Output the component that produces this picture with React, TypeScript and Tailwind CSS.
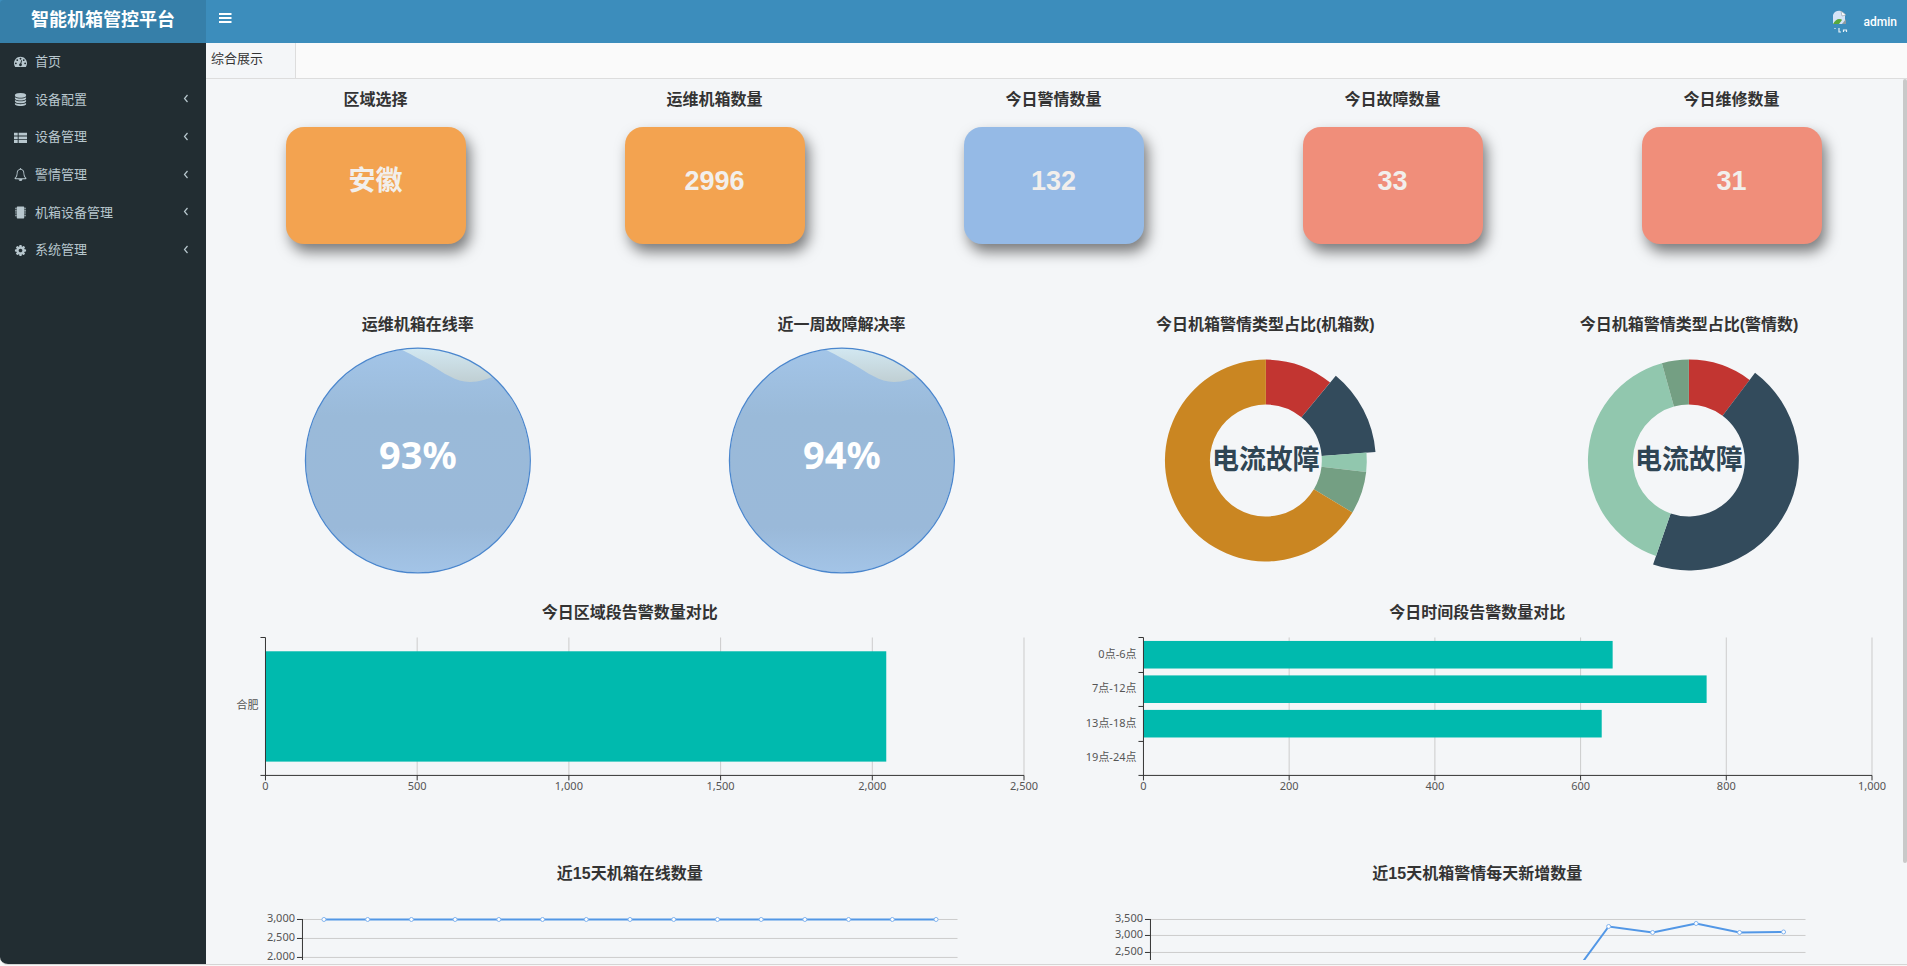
import { useState } from 'react'
import type { ReactNode } from 'react'

const UI_FONT = 'font-["Liberation_Sans","Noto_Sans_CJK_SC",sans-serif]'
const CHART_FONT = 'font-["Noto_Sans","Noto_Sans_CJK_SC",sans-serif]'

const ICONS: Record<string, string> = {
  dashboard:
    'M384 1152q0-53-37.5-90.5t-90.5-37.5-90.5 37.5-37.5 90.5 37.5 90.5 90.5 37.5 90.5-37.5 37.5-90.5zm192-448q0-53-37.5-90.5t-90.5-37.5-90.5 37.5-37.5 90.5 37.5 90.5 90.5 37.5 90.5-37.5 37.5-90.5zm428 481l101-382q6-26-7.5-48.5t-38.5-29.5-48 6.5-30 39.5l-101 382q-60 5-107 43.5t-63 98.5q-20 77 20 146t117 89 146-20 89-117q16-60-6-117t-72-91zm660-33q0-53-37.5-90.5t-90.5-37.5-90.5 37.5-37.5 90.5 37.5 90.5 90.5 37.5 90.5-37.5 37.5-90.5zm-640-640q0-53-37.5-90.5t-90.5-37.5-90.5 37.5-37.5 90.5 37.5 90.5 90.5 37.5 90.5-37.5 37.5-90.5zm448 192q0-53-37.5-90.5t-90.5-37.5-90.5 37.5-37.5 90.5 37.5 90.5 90.5 37.5 90.5-37.5 37.5-90.5zm320 448q0 261-141 483-19 29-54 29h-1402q-35 0-54-29-141-221-141-483 0-182 71-348t191-286 286-191 348-71 348 71 286 191 191 286 71 348z',
  database:
    'M896 768q237 0 443-43t325-127v170q0 69-103 128t-280 93.5-385 34.5-385-34.5-280-93.5-103-128v-170q119 84 325 127t443 43zm0 768q237 0 443-43t325-127v170q0 69-103 128t-280 93.5-385 34.5-385-34.5-280-93.5-103-128v-170q119 84 325 127t443 43zm0-384q237 0 443-43t325-127v170q0 69-103 128t-280 93.5-385 34.5-385-34.5-280-93.5-103-128v-170q119 84 325 127t443 43zm0-1152q208 0 385 34.5t280 93.5 103 128v128q0 69-103 128t-280 93.5-385 34.5-385-34.5-280-93.5-103-128v-128q0-69 103-128t280-93.5 385-34.5z',
  list: 'M0 230h512v384h-512zM0 742h512v384h-512zM0 1254h512v384h-512zM640 230h1152v384h-1152zM640 742h1152v384h-1152zM640 1254h1152v384h-1152z',
  bell: 'M912 1696q0-16-16-16-59 0-101.5-42.5t-42.5-101.5q0-16-16-16t-16 16q0 73 51.5 124.5t124.5 51.5q16 0 16-16zm-666-288h1300q-266-300-266-832 0-51-24-105t-69-103-121.5-80.5-169.5-31.5-169.5 31.5-121.5 80.5-69 103-24 105q0 532-266 832zm1482 0q0 52-38 90t-90 38h-448q0 106-75 181t-181 75-181-75-75-181h-448q-52 0-90-38t-38-90q50-42 91-88t85-119.5 74.5-158.5 50-206 19.5-260q0-152 117-282.5t307-158.5q-8-19-8-39 0-40 28-68t68-28 68 28 28 68q0 20-8 39 190 28 307 158.5t117 282.5q0 139 19.5 260t50 206 74.5 158.5 85 119.5 91 88z',
  chip: 'M480 64h832q96 0 96 96v1472q0 96-96 96h-832q-96 0-96-96v-1472q0-96 96-96zM160 256h192v128h-192zM160 512h192v128h-192zM160 768h192v128h-192zM160 1024h192v128h-192zM160 1280h192v128h-192zM1440 256h192v128h-192zM1440 512h192v128h-192zM1440 768h192v128h-192zM1440 1024h192v128h-192zM1440 1280h192v128h-192z',
  cog: 'M1152 896q0-106-75-181t-181-75-181 75-75 181 75 181 181 75 181-75 75-181zm512-109v222q0 12-8 23t-20 13l-185 28q-19 54-39 91 35 50 107 138 10 12 10 25t-9 23q-27 37-99 108t-94 71q-12 0-26-9l-138-108q-44 23-91 38-16 136-29 186-7 28-36 28h-222q-14 0-24.5-8.5t-11.5-21.5l-28-184q-49-16-90-37l-141 107q-10 9-25 9-14 0-25-11-126-114-165-168-7-10-7-23 0-12 8-23 15-21 51-66.5t54-70.5q-27-50-41-99l-183-27q-13-2-21-12.5t-8-23.5v-222q0-12 8-23t19-13l186-28q14-46 39-92-40-57-107-138-10-12-10-24 0-10 9-23 26-36 98.5-107.5t94.5-71.5q13 0 26 10l138 107q44-23 91-38 16-136 29-186 7-28 36-28h222q14 0 24.5 8.5t11.5 21.5l28 184q49 16 90 37l142-107q9-9 24-9 13 0 25 10 129 119 165 170 7 8 7 22 0 12-8 23-15 21-51 66.5t-54 70.5q26 50 41 98l183 28q13 2 21 12.5t8 23.5z',
}

const MENU = [
  { icon: 'dashboard', label: '首页', children: false },
  { icon: 'database', label: '设备配置', children: true },
  { icon: 'list', label: '设备管理', children: true },
  { icon: 'bell', label: '警情管理', children: true },
  { icon: 'chip', label: '机箱设备管理', children: true },
  { icon: 'cog', label: '系统管理', children: true },
]

const CARDS = [
  { title: '区域选择', value: '安徽', color: 'bg-[#f3a350]' },
  { title: '运维机箱数量', value: '2996', color: 'bg-[#f3a350]' },
  { title: '今日警情数量', value: '132', color: 'bg-[#95bae6]' },
  { title: '今日故障数量', value: '33', color: 'bg-[#f08e7a]' },
  { title: '今日维修数量', value: '31', color: 'bg-[#f08e7a]' },
]

type Slice = { from: number; to: number; color: string; active?: boolean }

const BOX_SLICES: Slice[] = [
  { from: 0, to: 39.5, color: '#c23531' },
  { from: 39.5, to: 85.5, color: '#334b5c', active: true },
  { from: 85.5, to: 96.5, color: '#91c7ae' },
  { from: 96.5, to: 121, color: '#749f83' },
  { from: 121, to: 360, color: '#ca8622' },
]

const ALARM_SLICES: Slice[] = [
  { from: 0, to: 37, color: '#c23531' },
  { from: 37, to: 199, color: '#334b5c', active: true },
  { from: 199, to: 344.5, color: '#91c7ae' },
  { from: 344.5, to: 360, color: '#749f83' },
]

function SectionTitle({ children }: { children: ReactNode }) {
  return <h3 className="h-6 text-center text-base leading-[26px] font-bold text-[#333]">{children}</h3>
}

function Liquid({ id, label }: { id: string; label: string }) {
  return (
    <svg viewBox="0 0 424 252" className={`h-[252px] w-full ${CHART_FONT}`} role="img" aria-label={label}>
      <defs>
        <linearGradient id={`${id}-water`} x1="0" y1="0" x2="0" y2="1">
          <stop offset="0" stopColor="#a3c5e8" />
          <stop offset="0.3" stopColor="#9abad9" />
          <stop offset="0.8" stopColor="#9ab9d9" />
          <stop offset="1" stopColor="#a3c4e7" />
        </linearGradient>
        <linearGradient id={`${id}-gap`} x1="0" y1="0" x2="0" y2="1">
          <stop offset="0" stopColor="#d6edf8" />
          <stop offset="1" stopColor="#c0cfd3" />
        </linearGradient>
        <clipPath id={`${id}-clip`}>
          <circle cx="212" cy="124.5" r="112" />
        </clipPath>
      </defs>
      <circle cx="212" cy="124.5" r="112" fill={`url(#${id}-water)`} />
      <path
        d="M193 12 C204 18 212 22 223 28 C238 37 250 46 264 46 C274 46 281 43 292 39 V5 H193 Z"
        fill={`url(#${id}-gap)`}
        clipPath={`url(#${id}-clip)`}
      />
      <circle cx="212" cy="124.5" r="112.5" fill="none" stroke="#4a86cd" strokeWidth="1.3" />
      <text x="212" y="133" textAnchor="middle" fontSize="38" fontWeight="700" fill="#fff">
        {label}
      </text>
    </svg>
  )
}

function slicePath({ from, to, active }: Slice) {
  const outer = active ? 110 : 101
  const inner = 56
  const at = (deg: number, r: number) => {
    const a = (deg * Math.PI) / 180
    return `${212 + r * Math.sin(a)} ${124.5 - r * Math.cos(a)}`
  }
  const large = to - from > 180 ? 1 : 0
  return `M${at(from, outer)} A${outer} ${outer} 0 ${large} 1 ${at(to, outer)} L${at(to, inner)} A${inner} ${inner} 0 ${large} 0 ${at(from, inner)} Z`
}

function Donut({ slices, label }: { slices: Slice[]; label: string }) {
  return (
    <svg viewBox="0 0 424 252" className={`h-[252px] w-full ${CHART_FONT}`} role="img" aria-label={label}>
      {slices.map((s) => (
        <path key={s.from} d={slicePath(s)} fill={s.color} />
      ))}
      <text x="212" y="133" textAnchor="middle" fontSize="27" fontWeight="700" fill="#2f4554">
        {label}
      </text>
    </svg>
  )
}

type BarProps = {
  x0: number
  x1: number
  ticks: string[]
  rows: { label: string; value: number }[]
  max: number
}

function BarChart({ x0, x1, ticks, rows, max }: BarProps) {
  const top = 13.5
  const bottom = 151.5
  const step = (bottom - top) / rows.length
  const gap = (x1 - x0) / (ticks.length - 1)
  return (
    <svg viewBox="0 0 848 177" className={`w-full ${CHART_FONT}`} fontSize="11" fill="#555">
      {ticks.map((t, i) => (
        <g key={t}>
          {i > 0 && <path d={`M${x0 + gap * i} ${top}V${bottom}`} stroke="#ccc" />}
          <path d={`M${x0 + gap * i} ${bottom}v5`} stroke="#333" />
          <text x={x0 + gap * i} y="166" textAnchor="middle">
            {t}
          </text>
        </g>
      ))}
      {rows.map((r, i) => (
        <g key={r.label}>
          <rect
            x={x0}
            y={top + step * (i + 0.1)}
            width={(r.value / max) * (x1 - x0)}
            height={step * 0.8}
            fill="#00baae"
          />
          <path d={`M${x0 - 5} ${Math.floor(top + step * i) + 0.5}h5`} stroke="#333" />
          <text x={x0 - 7} y={top + step * (i + 0.5) + 3} textAnchor="end">
            {r.label}
          </text>
        </g>
      ))}
      <path d={`M${x0} ${top}V${bottom}M${x0 - 5} ${bottom}H${x1}`} stroke="#333" />
    </svg>
  )
}

type LineProps = {
  ticks: { label: string; y: number }[]
  points: [number, number][]
}

function LineChart({ ticks, points }: LineProps) {
  return (
    <svg viewBox="0 0 848 120" className={`w-full ${CHART_FONT}`} fontSize="11" fill="#555">
      {ticks.map((t) => (
        <g key={t.label}>
          <path d={`M96 ${t.y}H752`} stroke="#ccc" />
          <path d={`M91 ${t.y}h5`} stroke="#333" />
          <text x="89" y={t.y + 3} textAnchor="end">
            {t.label}
          </text>
        </g>
      ))}
      <path d="M96.5 34V120" stroke="#333" />
      <polyline points={points.map((p) => p.join(',')).join(' ')} fill="none" stroke="#5297e6" strokeWidth="2" />
      {points.map(([x, y]) => (
        <circle key={x} cx={x} cy={y} r="2" fill="#fff" stroke="#7fb2ee" />
      ))}
    </svg>
  )
}

const ONLINE: [number, number][] = Array.from({ length: 15 }, (_, i) => [118 + i * 43.75, 34.5])

const NEW_ALARMS: [number, number][] = [
  [511, 101.5],
  [555, 41.5],
  [599, 47.5],
  [642.5, 38.5],
  [686, 47.5],
  [730, 47],
]

export default function App() {
  const [open, setOpen] = useState(true)

  return (
    <div className={`flex h-screen flex-col bg-[#f8f8f8] text-[#333] ${UI_FONT}`}>
      <div className="flex min-h-0 flex-1 flex-col overflow-hidden rounded-bl-lg border-b border-[#d5d5d5] bg-[#f4f6f8]">
        <header className="flex h-[43px] shrink-0 bg-[#3c8dbc] text-white">
          {open && (
            <a
              href="#home"
              className="flex w-[206px] shrink-0 justify-center rounded-tl-sm bg-[#367fa9] text-lg leading-10 font-bold"
            >
              智能机箱管控平台
            </a>
          )}
          <button
            type="button"
            aria-label="Toggle navigation"
            className="flex h-9 items-center px-[13px]"
            onClick={() => setOpen(!open)}
          >
            <svg width="13" height="10" viewBox="0 0 13 10" fill="currentColor">
              <path d="M0 0h12.5v2H0zM0 4h12.5v2H0zM0 8h12.5v2H0z" />
            </svg>
          </button>
          <div className="ml-auto flex items-center gap-4 pr-2.5 font-[Roboto,sans-serif] text-xs font-medium">
            <svg width="16" height="24" viewBox="0 0 16 24" aria-hidden="true">
              <path d="M1 14V5Q3 0 9 1l4 3v9l-3 1H1z" fill="#d5e4f7" />
              <path d="M9 1l5 4-4 1z" fill="#fff" stroke="#8b98a5" strokeWidth="0.6" />
              <path d="M1 14q3-5 6-5t3 1l-3 4z" fill="#58a83c" />
              <path d="M10 14l4-5v5z" fill="#8f9ba0" />
              <path d="M3 18v1M7 18v4h2M11.5 22v-2h3v2" stroke="#e8f2f8" strokeWidth="1.2" fill="none" />
            </svg>
            <a href="#user">admin</a>
          </div>
        </header>

        <div className="flex min-h-0 flex-1">
          {/* Sidebar */}
          {open && (
            <nav className="w-[206px] shrink-0 bg-[#222d32] text-[13px] text-[#b8c7ce]">
              <ul className="grid h-[226px] auto-rows-fr">
                {MENU.map((item) => (
                  <li key={item.icon}>
                    <a href={`#${item.icon}`} className="flex h-full items-center gap-2 pr-4 pl-3.5">
                      <svg width="13" height="13" viewBox="0 0 1792 1792" fill="currentColor">
                        <path d={ICONS[item.icon]} />
                      </svg>
                      <span className="flex-1">{item.label}</span>
                      {item.children && (
                        <svg width="7" height="10" viewBox="0 0 7 10" fill="none" stroke="currentColor" strokeWidth="1.2">
                          <path d="M4.5 1L1.5 4.5 4.5 8" />
                        </svg>
                      )}
                    </a>
                  </li>
                ))}
              </ul>
            </nav>
          )}

          <div className="flex min-w-0 flex-1 flex-col">
            {/* Tabs */}
            <div className="flex h-9 shrink-0 border-b border-[#ddd] bg-[#fafafa]">
              <a href="#overview" className="w-[90px] border-r border-[#ddd] bg-[#f4f6f8] px-[5px] text-[13px] leading-8">
                综合展示
              </a>
            </div>

            <div className="flex min-h-0 flex-1">
              <main className="mb-1 min-w-0 flex-1 overflow-hidden pt-2 pr-0.5">
                <section className="grid grid-cols-5">
                  {CARDS.map((c) => (
                    <div key={c.title} className="flex flex-col items-center gap-4">
                      <SectionTitle>{c.title}</SectionTitle>
                      <div
                        className={`flex h-[117px] w-[180px] justify-center rounded-[18px] pt-9 text-[27px] leading-9 font-bold text-[#f2efec] shadow-[4px_8px_14px_rgba(0,0,0,0.5)] ${c.color}`}
                      >
                        {c.value}
                      </div>
                    </div>
                  ))}
                </section>

                <section className="mt-[68px] grid grid-cols-4">
                  <div>
                    <SectionTitle>运维机箱在线率</SectionTitle>
                    <Liquid id="online" label="93%" />
                  </div>
                  <div>
                    <SectionTitle>近一周故障解决率</SectionTitle>
                    <Liquid id="solved" label="94%" />
                  </div>
                  <div>
                    <SectionTitle>今日机箱警情类型占比(机箱数)</SectionTitle>
                    <Donut slices={BOX_SLICES} label="电流故障" />
                  </div>
                  <div>
                    <SectionTitle>今日机箱警情类型占比(警情数)</SectionTitle>
                    <Donut slices={ALARM_SLICES} label="电流故障" />
                  </div>
                </section>

                <section className="mt-3 grid grid-cols-2">
                  <div>
                    <SectionTitle>今日区域段告警数量对比</SectionTitle>
                    <BarChart
                      x0={59.5}
                      x1={818.5}
                      max={2500}
                      ticks={['0', '500', '1,000', '1,500', '2,000', '2,500']}
                      rows={[{ label: '合肥', value: 2046 }]}
                    />
                  </div>
                  <div>
                    <SectionTitle>今日时间段告警数量对比</SectionTitle>
                    <BarChart
                      x0={89.5}
                      x1={818.5}
                      max={1000}
                      ticks={['0', '200', '400', '600', '800', '1,000']}
                      rows={[
                        { label: '0点-6点', value: 644 },
                        { label: '7点-12点', value: 773 },
                        { label: '13点-18点', value: 629 },
                        { label: '19点-24点', value: 0 },
                      ]}
                    />
                  </div>
                </section>

                <section className="mt-15 grid grid-cols-2">
                  <div>
                    <SectionTitle>近15天机箱在线数量</SectionTitle>
                    <LineChart
                      ticks={[
                        { label: '3,000', y: 34.5 },
                        { label: '2,500', y: 53.5 },
                        { label: '2,000', y: 72.5 },
                      ]}
                      points={ONLINE}
                    />
                  </div>
                  <div>
                    <SectionTitle>近15天机箱警情每天新增数量</SectionTitle>
                    <LineChart
                      ticks={[
                        { label: '3,500', y: 34.5 },
                        { label: '3,000', y: 50.5 },
                        { label: '2,500', y: 67.5 },
                      ]}
                      points={NEW_ALARMS}
                    />
                  </div>
                </section>
              </main>
              {/* Scrollbar */}
              <div className="w-1 shrink-0">
                <div className="h-[784px] rounded-sm bg-[#c9c9c9]" />
              </div>
            </div>
          </div>
        </div>
      </div>
      <div className="h-px shrink-0" />
    </div>
  )
}
